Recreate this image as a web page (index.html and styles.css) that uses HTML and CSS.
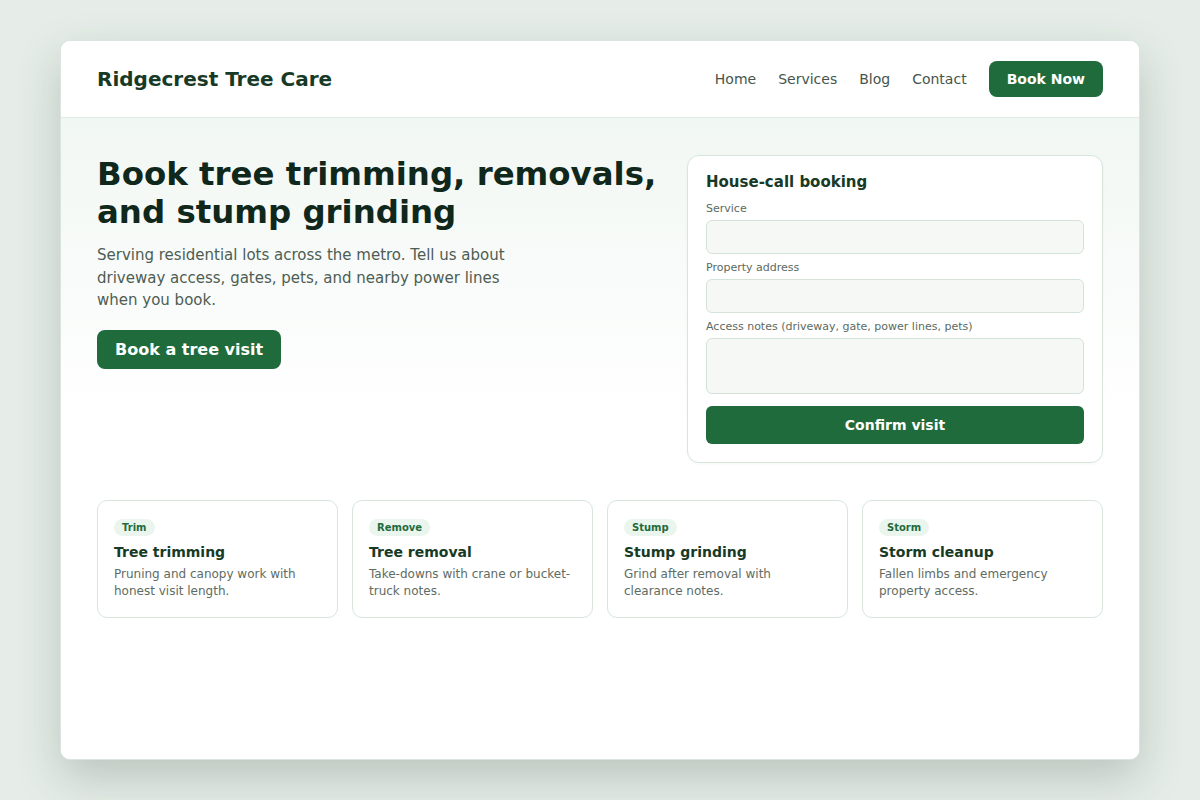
FILE: index.html
```html
<!DOCTYPE html>
<html lang="en">
<head>
<meta charset="utf-8">
<title>Ridgecrest Tree Care</title>
<link rel="stylesheet" href="styles.css">
</head>
<body>
<div class="window">
  <header class="topbar">
    <div class="brand">Ridgecrest Tree Care</div>
    <nav class="nav">
      <a href="#">Home</a>
      <a href="#">Services</a>
      <a href="#">Blog</a>
      <a href="#">Contact</a>
      <button class="btn btn-nav">Book Now</button>
    </nav>
  </header>
  <main class="main">
    <section class="hero">
      <div class="hero-text">
        <h1>Book tree trimming, removals, and stump grinding</h1>
        <p class="lead">Serving residential lots across the metro. Tell us about driveway access, gates, pets, and nearby power lines when you book.</p>
        <button class="btn btn-hero">Book a tree visit</button>
      </div>
      <form class="booking">
        <h2>House-call booking</h2>
        <label class="field-label">Service</label>
        <div class="input"></div>
        <label class="field-label">Property address</label>
        <div class="input"></div>
        <label class="field-label">Access notes (driveway, gate, power lines, pets)</label>
        <div class="input textarea"></div>
        <button type="button" class="btn btn-confirm">Confirm visit</button>
      </form>
    </section>
    <section class="services">
      <div class="svc">
        <span class="tag">Trim</span>
        <h3>Tree trimming</h3>
        <p>Pruning and canopy work with honest visit length.</p>
      </div>
      <div class="svc">
        <span class="tag">Remove</span>
        <h3>Tree removal</h3>
        <p>Take-downs with crane or bucket-truck notes.</p>
      </div>
      <div class="svc">
        <span class="tag">Stump</span>
        <h3>Stump grinding</h3>
        <p>Grind after removal with clearance notes.</p>
      </div>
      <div class="svc">
        <span class="tag">Storm</span>
        <h3>Storm cleanup</h3>
        <p>Fallen limbs and emergency property access.</p>
      </div>
    </section>
  </main>
</div>
</body>
</html>
```

FILE: styles.css
```css
* { box-sizing: border-box; }
html, body { margin: 0; padding: 0; }
body {
  background: #e6ede8;
  font-family: "DejaVu Sans", "Liberation Sans", sans-serif;
  padding: 40px 60px;
  height: 800px;
}
.window {
  width: 1080px;
  height: 720px;
  background: #ffffff;
  border: 1px solid #dbe4de;
  border-radius: 10px;
  box-shadow: 0 18px 45px rgba(30, 60, 40, 0.22);
  overflow: hidden;
  display: flex;
  flex-direction: column;
}
.topbar {
  display: flex;
  align-items: center;
  justify-content: space-between;
  padding: 20px 36px;
  border-bottom: 1px solid #e2ebe5;
  background: #fff;
}
.brand {
  font-size: 20px;
  font-weight: 700;
  color: #173a26;
}
.nav {
  display: flex;
  align-items: center;
  gap: 22px;
}
.nav a {
  font-size: 14px;
  color: #46554b;
  text-decoration: none;
}
.btn {
  font-family: inherit;
  border: none;
  background: #1f6b3c;
  color: #fff;
  font-weight: 700;
  cursor: pointer;
}
.btn-nav {
  font-size: 14px;
  height: 36px;
  padding: 0 18px;
  border-radius: 8px;
}
.main {
  flex: 1;
  background: linear-gradient(180deg, #f1f7f3 0px, #ffffff 300px);
  padding: 37px 36px 0 36px;
}
.hero {
  display: grid;
  grid-template-columns: 1fr 416px;
  gap: 30px;
  align-items: start;
}
.hero h1 {
  margin: 0;
  font-size: 32.4px;
  line-height: 38px;
  font-weight: 700;
  color: #10281b;
}
.lead {
  margin: 13px 0 0 0;
  font-size: 15px;
  line-height: 22.5px;
  color: #4e5d53;
  max-width: 430px;
}
.btn-hero {
  margin-top: 18px;
  font-size: 16px;
  height: 39px;
  padding: 0 18px;
  border-radius: 8px;
}
.booking {
  margin: 0;
  background: #fff;
  border: 1px solid #d6e6db;
  border-radius: 12px;
  padding: 17px 18px 18px 18px;
  display: flex;
  flex-direction: column;
  box-shadow: 0 1px 3px rgba(30, 60, 40, 0.04);
}
.booking h2 {
  margin: 0 0 10px 0;
  font-size: 15px;
  line-height: 19px;
  color: #173a26;
}
.field-label {
  font-size: 11px;
  line-height: 14px;
  color: #5b6a60;
  margin-bottom: 4px;
}
.input {
  height: 34px;
  background: #f6f8f6;
  border: 1px solid #d3e3d8;
  border-radius: 6px;
  margin-bottom: 7px;
}
.input.textarea {
  height: 56px;
  margin-bottom: 12px;
}
.btn-confirm {
  height: 38px;
  font-size: 14px;
  border-radius: 6px;
  width: 100%;
}
.services {
  margin-top: 37px;
  display: grid;
  grid-template-columns: repeat(4, 1fr);
  gap: 14px;
}
.svc {
  border: 1px solid #d6e6db;
  border-radius: 10px;
  padding: 18px 16px 17px 16px;
  background: #fff;
  display: flex;
  flex-direction: column;
  align-items: flex-start;
}
.tag {
  display: block;
  font-size: 10px;
  line-height: 17px;
  font-weight: 700;
  color: #1f6b3c;
  background: #eaf5ed;
  border-radius: 999px;
  padding: 0 8px;
}
.svc h3 {
  margin: 7px 0 5px 0;
  font-size: 14px;
  line-height: 18px;
  color: #173a26;
}
.svc p {
  margin: 0;
  font-size: 12px;
  line-height: 17px;
  color: #5e6c63;
}
```
